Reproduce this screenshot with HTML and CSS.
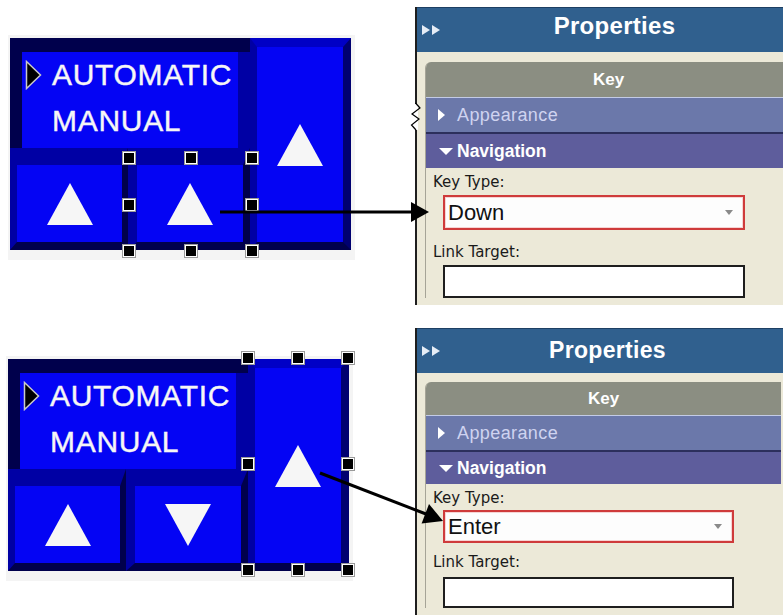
FILE: index.html
```html
<!DOCTYPE html>
<html lang="en">
<head>
  <meta charset="UTF-8">
  <title>Key Type – Down / Enter</title>
  <link rel="stylesheet" href="styles.css">
</head>
<body>

<div class="diagram">

  <!-- first example: middle key set to Down -->
  <section class="row">
    <div class="canvas">
      <div class="device">
        <div class="display">
          <div class="menu-item"><span class="marker"><svg width="17" height="30" viewBox="0 0 17 30"><polygon points="1.5,1.5 15.5,15 1.5,28.5" fill="#000" stroke="#c9c9c9" stroke-width="1.5"/></svg></span>AUTOMATIC</div>
          <div class="menu-item"><span class="marker"></span>MANUAL</div>
        </div>
        <div class="key key-tall"><svg class="tri" viewBox="0 0 46 42"><polygon points="23,0 46,42 0,42"/></svg></div>
        <div class="keys">
          <div class="key key-left"><svg class="tri" viewBox="0 0 46 42"><polygon points="23,0 46,42 0,42"/></svg></div>
          <div class="key key-mid"><svg class="tri" viewBox="0 0 46 42"><polygon points="23,0 46,42 0,42"/></svg></div>
        </div>
      </div>
      <div class="selection sel-mid">
        <span class="handle nw"></span><span class="handle n"></span><span class="handle ne"></span>
        <span class="handle w"></span><span class="handle e"></span>
        <span class="handle sw"></span><span class="handle s"></span><span class="handle se"></span>
      </div>
    </div>

    <aside class="props props-down">
      <header class="props-title">
        <svg class="collapse" width="20" height="10" viewBox="0 0 20 10"><polygon points="0,0 8,5 0,10"/><polygon points="10,0 18,5 10,10"/></svg>
        <h2>Properties</h2>
      </header>
      <div class="group">
        <div class="group-head">Key</div>
        <div class="band band-closed"><svg class="caret-right" width="7" height="12" viewBox="0 0 7 12"><polygon points="0,0 7,6 0,12"/></svg>Appearance</div>
        <div class="band band-open"><svg class="caret-down" width="14" height="7" viewBox="0 0 14 7"><polygon points="0,0 14,0 7,7"/></svg>Navigation</div>
        <div class="fields">
          <label>Key Type:</label>
          <div class="select">Down<svg width="8" height="5" viewBox="0 0 8 5"><polygon points="0,0 8,0 4,5"/></svg></div>
          <label>Link Target:</label>
          <div class="input"></div>
        </div>
      </div>
    </aside>
  </section>

  <!-- second example: tall key set to Enter -->
  <section class="row row-second">
    <div class="canvas">
      <div class="device">
        <div class="display">
          <div class="menu-item"><span class="marker"><svg width="17" height="30" viewBox="0 0 17 30"><polygon points="1.5,1.5 15.5,15 1.5,28.5" fill="#000" stroke="#c9c9c9" stroke-width="1.5"/></svg></span>AUTOMATIC</div>
          <div class="menu-item"><span class="marker"></span>MANUAL</div>
        </div>
        <div class="key key-tall"><svg class="tri" viewBox="0 0 46 42"><polygon points="23,0 46,42 0,42"/></svg></div>
        <div class="keys">
          <div class="key key-left"><svg class="tri" viewBox="0 0 46 42"><polygon points="23,0 46,42 0,42"/></svg></div>
          <div class="key key-mid"><svg class="tri" viewBox="0 0 46 42"><polygon points="0,0 46,0 23,42"/></svg></div>
        </div>
      </div>
      <div class="selection sel-tall">
        <span class="handle nw"></span><span class="handle n"></span><span class="handle ne"></span>
        <span class="handle w"></span><span class="handle e"></span>
        <span class="handle sw"></span><span class="handle s"></span><span class="handle se"></span>
      </div>
    </div>

    <aside class="props props-enter">
      <header class="props-title">
        <svg class="collapse" width="20" height="10" viewBox="0 0 20 10"><polygon points="0,0 8,5 0,10"/><polygon points="10,0 18,5 10,10"/></svg>
        <h2>Properties</h2>
      </header>
      <div class="group">
        <div class="group-head">Key</div>
        <div class="band band-closed"><svg class="caret-right" width="7" height="12" viewBox="0 0 7 12"><polygon points="0,0 7,6 0,12"/></svg>Appearance</div>
        <div class="band band-open"><svg class="caret-down" width="14" height="7" viewBox="0 0 14 7"><polygon points="0,0 14,0 7,7"/></svg>Navigation</div>
        <div class="fields">
          <label>Key Type:</label>
          <div class="select">Enter<svg width="8" height="5" viewBox="0 0 8 5"><polygon points="0,0 8,0 4,5"/></svg></div>
          <label>Link Target:</label>
          <div class="input"></div>
        </div>
      </div>
    </aside>
  </section>

  <!-- callout arrows and the torn-edge mark -->
  <svg class="overlay" width="783" height="615" viewBox="0 0 783 615">
    <line x1="220" y1="212" x2="414" y2="212" stroke="#000" stroke-width="3"/>
    <polygon points="429,212 411,202 411,222" fill="#000"/>
    <line x1="320" y1="473" x2="426" y2="514" stroke="#000" stroke-width="3"/>
    <polygon points="443,521 421.6,523.5 429,504" fill="#000"/>
    <rect x="414" y="104" width="4" height="26" fill="#fff"/>
    <polyline points="415.5,103 420,108 412,114 419,119 411.5,125 416,130" fill="none" stroke="#000" stroke-width="1.2"/>
  </svg>

</div>

</body>
</html>
```

FILE: styles.css
```css
body {
  margin: 0;
  background: #fff;
  overflow: hidden;
}
.diagram {
  position: relative;
  width: 783px;
  height: 615px;
  overflow: hidden;
}
.row {
  display: flex;
  align-items: flex-start;
  gap: 60px;
  padding: 7px 0 0 8px;
}
.row-second {
  margin-top: 16px;
  padding-left: 6px;
  gap: 62px;
}

/* device picture */
.canvas {
  position: relative;
  flex: none;
  width: 347px;
  height: 225px;
  margin-top: 28px;
  padding: 3px 2px 0;
  box-sizing: border-box;
  background: #f4f4f4;
}
.device {
  display: grid;
  grid-template-columns: 240px 101px;
  grid-template-rows: 110px 102px;
  width: 341px;
  height: 212px;
  background: #00004c;
}
.display {
  grid-column: 1;
  grid-row: 1;
  margin: 14px 0 0 12px;
  background: #0404f4;
  border-right: 12px solid #0000a4;
  color: #f6f6f6;
  font-family: "Liberation Sans", Arial, sans-serif;
  font-size: 30px;
  letter-spacing: 0.7px;
  -webkit-text-stroke: 0.4px #f6f6f6;
}
.menu-item {
  display: flex;
  align-items: center;
  height: 46px;
}
.marker {
  display: flex;
  width: 30px;
  padding-left: 3px;
  box-sizing: border-box;
}
.key {
  display: flex;
  align-items: center;
  justify-content: center;
  background: #0404f4;
  border-style: solid;
  border-color: #0000a4 #000070 #00004c #0000a4;
}
.key-tall {
  grid-column: 2;
  grid-row: 1 / 3;
  border-width: 9px 8px 8px 7px;
  border-top-color: #0000c6;
}
.keys {
  grid-column: 1;
  grid-row: 2;
  display: flex;
}
.key-left {
  width: 118px;
  box-sizing: border-box;
  border-width: 17px 6px 8px 7px;
  border-right-color: #00004c;
}
.key-mid {
  flex: 1;
  border-width: 17px 7px 8px 9px;
  border-right-color: #00004c;
}
.tri {
  width: 46px;
  height: 42px;
  fill: #f6f6f6;
}

/* selection handles */
.selection {
  position: absolute;
}
.sel-mid {
  left: 121px;
  top: 123px;
  width: 123px;
  height: 93px;
}
.sel-tall {
  left: 242px;
  top: 2px;
  width: 100px;
  height: 212px;
}
.handle {
  position: absolute;
  width: 10px;
  height: 10px;
  background: #000;
  border: 1px solid #fff;
  outline: 1px solid #9a9a9a;
  transform: translate(-50%, -50%);
}
.nw { left: 0; top: 0; }
.n { left: 50%; top: 0; }
.ne { left: 100%; top: 0; }
.w { left: 0; top: 50%; }
.e { left: 100%; top: 50%; }
.sw { left: 0; top: 100%; }
.s { left: 50%; top: 100%; }
.se { left: 100%; top: 100%; }

/* properties panel */
.props {
  flex: none;
  width: 392px;
  height: 298px;
  box-sizing: border-box;
  border-left: 2px solid #1e1e1e;
  background: #ece9d8;
  overflow: hidden;
  font-family: "Liberation Sans", Arial, sans-serif;
}
.props-enter {
  width: 378px;
  height: 300px;
}
.props-title {
  display: grid;
  grid-template-columns: 1fr auto 1fr;
  align-items: center;
  height: 45px;
  box-sizing: border-box;
  padding-left: 5px;
  background: #30608e;
  border-top: 1px solid #1d3f63;
}
.props-title h2 {
  margin: 0 0 2px;
  color: #fff;
  font-size: 24px;
  font-weight: bold;
  letter-spacing: 0.3px;
}
.props-down .props-title h2 {
  margin-bottom: 9px;
}
.props-enter .props-title h2 {
  font-size: 23px;
}
.collapse {
  fill: #e6edf6;
}
.group {
  margin: 10px 16px 0 8px;
  border-left: 1px solid #a6a497;
  border-top-left-radius: 6px;
  overflow: hidden;
}
.props-enter .group {
  margin: 9px 12px 0 8px;
}
.group-head {
  height: 35px;
  line-height: 36px;
  background: #8b8e82;
  color: #fff;
  font-size: 17px;
  font-weight: bold;
  text-align: center;
}
.props-enter .group-head {
  height: 33px;
  line-height: 34px;
}
.band {
  display: flex;
  align-items: center;
  height: 35px;
  box-sizing: border-box;
  padding-left: 12px;
}
.band-closed {
  border-top: 1px solid #c3cbe6;
  background: #6b78aa;
  color: #cfd3f0;
  font-size: 18px;
  letter-spacing: 0.4px;
}
.band-open {
  height: 36px;
  border-top: 2px solid #2c2f5c;
  background: #5e5d9c;
  color: #fff;
  font-size: 17.5px;
  font-weight: bold;
}
.props-enter .band-open {
  height: 34px;
}
.caret-right {
  fill: #fff;
  margin-right: 12px;
}
.caret-down {
  fill: #fff;
  margin: 0 4px 0 1px;
}
.fields {
  padding: 6px 0 0 7px;
}
.fields label {
  display: block;
  height: 17px;
  font-family: "DejaVu Sans", Verdana, sans-serif;
  font-size: 15px;
  line-height: 17px;
  color: #1a1a1a;
}
.select {
  display: flex;
  align-items: center;
  justify-content: space-between;
  width: 302px;
  height: 35px;
  box-sizing: border-box;
  margin: 4px 0 14px 10px;
  padding: 0 10px 0 3px;
  border: 2px solid #cf3b3b;
  box-shadow: inset 0 0 0 1px #f6d4d4;
  background: #fdfdfd;
  color: #111;
  font-size: 22px;
}
.select svg {
  fill: #8a8a8a;
}
.input {
  width: 302px;
  height: 33px;
  box-sizing: border-box;
  margin: 4px 0 0 10px;
  border: 2px solid #1e1e1e;
  background: #fff;
}
.props-enter .select {
  width: 291px;
  height: 33px;
  margin: 3px 0 11px 10px;
}
.props-enter .input {
  width: 291px;
  height: 31px;
  margin-top: 6px;
}

.overlay {
  position: absolute;
  left: 0;
  top: 0;
  pointer-events: none;
}
```
